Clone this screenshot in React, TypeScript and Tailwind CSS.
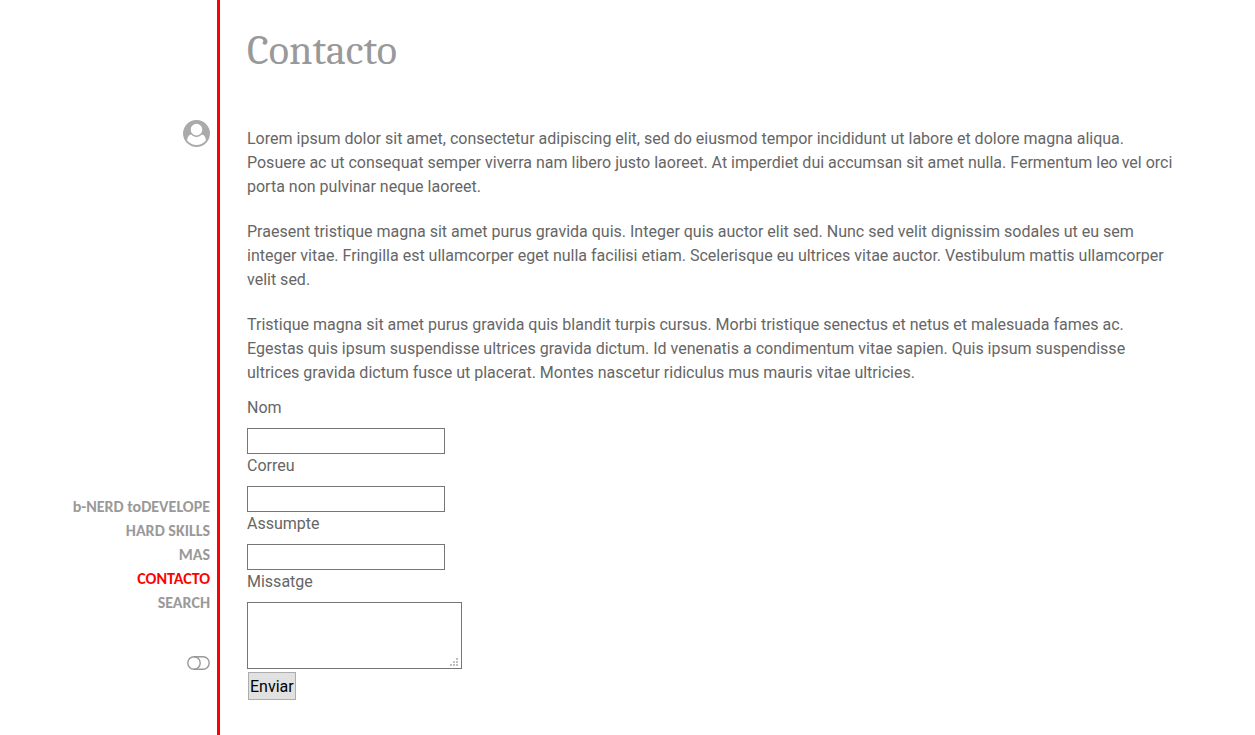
const sections = [
  { name: "b-NERD toDEVELOPE", href: "#develope" },
  { name: "HARD SKILLS", href: "#skills" },
  { name: "MAS", href: "#mas" },
  { name: "CONTACTO", href: "#contacto", current: true },
  { name: "SEARCH", href: "#search" },
];

const paragraphs = [
  "Lorem ipsum dolor sit amet, consectetur adipiscing elit, sed do eiusmod tempor incididunt ut labore et dolore magna aliqua. Posuere ac ut consequat semper viverra nam libero justo laoreet. At imperdiet dui accumsan sit amet nulla. Fermentum leo vel orci porta non pulvinar neque laoreet.",
  "Praesent tristique magna sit amet purus gravida quis. Integer quis auctor elit sed. Nunc sed velit dignissim sodales ut eu sem integer vitae. Fringilla est ullamcorper eget nulla facilisi etiam. Scelerisque eu ultrices vitae auctor. Vestibulum mattis ullamcorper velit sed.",
  "Tristique magna sit amet purus gravida quis blandit turpis cursus. Morbi tristique senectus et netus et malesuada fames ac. Egestas quis ipsum suspendisse ultrices gravida dictum. Id venenatis a condimentum vitae sapien. Quis ipsum suspendisse ultrices gravida dictum fusce ut placerat. Montes nascetur ridiculus mus mauris vitae ultricies.",
];

const fields = [
  { id: "nom", label: "Nom", type: "text" },
  { id: "correu", label: "Correu", type: "email" },
  { id: "assumpte", label: "Assumpte", type: "text" },
];

function UserIcon() {
  return (
    <svg className="size-[27px]" viewBox="0 0 1792 1792" fill="currentColor" aria-hidden="true">
      <path d="M1523 1339q-22-155-87.5-257.5t-184.5-118.5q-67 74-159.5 115.5t-195.5 41.5-195.5-41.5-159.5-115.5q-119 16-184.5 118.5t-87.5 257.5q106 150 271 237.5t356 87.5 356-87.5 271-237.5zm-243-699q0-159-112.5-271.5t-271.5-112.5-271.5 112.5-112.5 271.5 112.5 271.5 271.5 112.5 271.5-112.5 112.5-271.5zm512 256q0 182-71 347.5t-190.5 286-285.5 191.5-349 71q-182 0-348-71t-286-191-191-286-71-348 71-348 191-286 286-191 348-71 348 71 286 191 191 286 71 348z" />
    </svg>
  );
}

function ToggleIcon() {
  return (
    <svg className="h-[14px] w-[23px]" viewBox="0 0 23 14" fill="none" stroke="currentColor" strokeWidth="1.4" aria-hidden="true">
      <rect x="0.8" y="0.8" width="21.4" height="12.4" rx="6.2" />
      <path d="M7 0.8a6.2 6.2 0 0 1 0 12.4" />
    </svg>
  );
}

export default function App() {
  return (
    <div className="flex min-h-screen bg-white font-['Roboto',sans-serif] text-base leading-6 text-[#666]">
      <aside className="flex w-[220px] shrink-0 flex-col items-end border-r-3 border-[#f00] pt-30 pr-[7px] text-[#999]">
        <a href="#profile" aria-label="Perfil" className="text-[#aaa]">
          <UserIcon />
        </a>
        <nav className="mt-[348px] flex flex-col items-end font-['Carlito','Lato',sans-serif] text-base leading-6 font-bold">
          {sections.map((s) => (
            <a key={s.name} href={s.href} className={s.current ? "text-[#f00]" : ""}>
              {s.name}
            </a>
          ))}
        </nav>
        <button type="button" aria-label="Canviar tema" className="mt-[41px]">
          <ToggleIcon />
        </button>
      </aside>

      <main className="min-w-0 flex-1 pt-[27px] pr-20 pb-8 pl-[27px]">
        <h1 className="font-['Caladea','Liberation_Serif',serif] text-[42px] leading-12 text-[#999]">Contacto</h1>
        <div className="mt-[52px] flex flex-col gap-[21px]">
          {paragraphs.map((p) => (
            <p key={p}>{p}</p>
          ))}
        </div>
        <form className="mt-[11px] flex flex-col items-start" onSubmit={(e) => e.preventDefault()}>
          {fields.map((f) => (
            <div key={f.id} className="flex flex-col">
              <label htmlFor={f.id} className="mb-2">
                {f.label}
              </label>
              <input id={f.id} name={f.id} type={f.type} className="h-[26px] w-[198px] border border-[#767676] bg-white px-1" />
            </div>
          ))}
          <label htmlFor="missatge" className="mb-2">
            Missatge
          </label>
          <div className="relative">
            <textarea id="missatge" name="missatge" className="block h-[67px] w-[215px] resize-none border border-[#767676] bg-white px-1" />
            <svg className="pointer-events-none absolute right-1 bottom-[3px] size-2" viewBox="0 0 8 8" fill="#bfbfbf" aria-hidden="true">
              <path d="M6 0h2v2H6zM3 3h2v2H3zM6 3h2v2H6zM0 6h2v2H0zM3 6h2v2H3zM6 6h2v2H6z" />
            </svg>
          </div>
          <button type="submit" className="mt-[3px] ml-px h-7 border border-[#adadad] bg-[#e1e1e1] px-px pt-0.5 text-black">
            Enviar
          </button>
        </form>
      </main>
    </div>
  );
}
